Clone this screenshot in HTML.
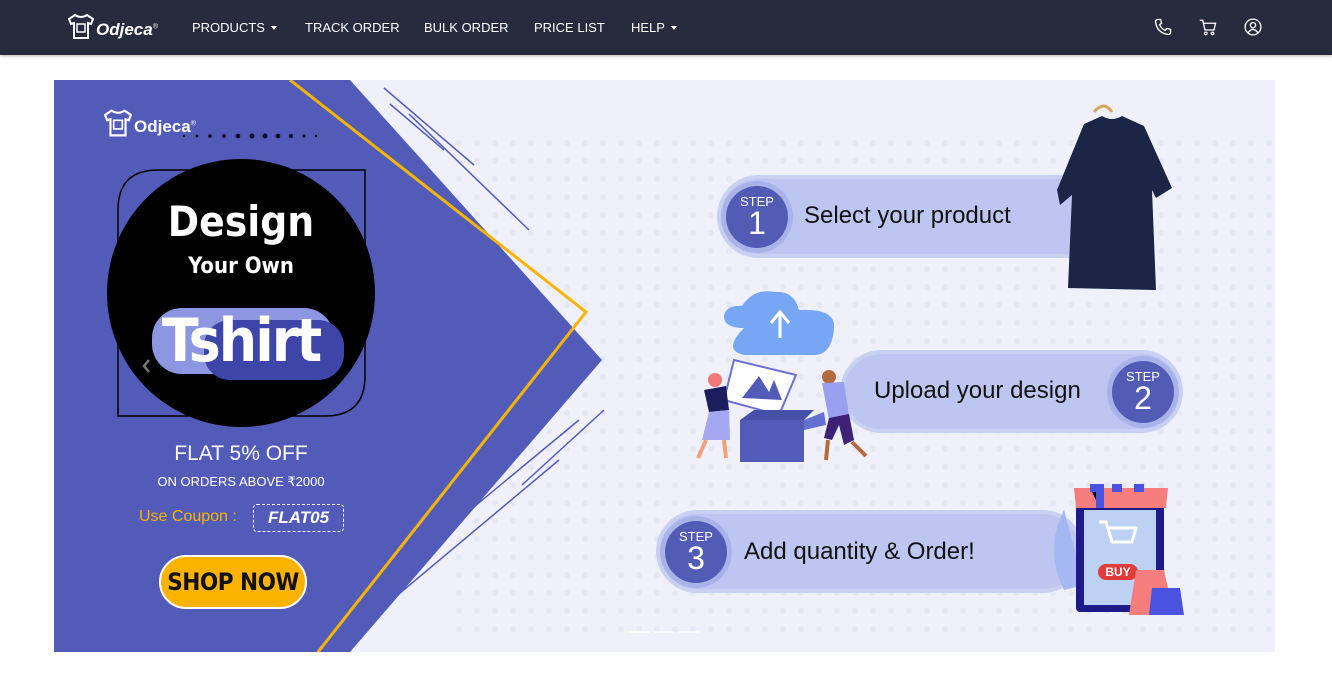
<!DOCTYPE html>
<html><head><meta charset="utf-8"><style>
*{margin:0;padding:0;box-sizing:border-box}
body{width:1332px;height:676px;background:#fff;font-family:"Liberation Sans",sans-serif;position:relative;overflow:hidden}
.nav{position:absolute;left:0;top:0;width:1332px;height:55px;background:#272b3e;box-shadow:0 1px 3px rgba(0,0,0,.3)}
.nav a{position:absolute;top:20px;color:#fff;font-size:13px;text-decoration:none;letter-spacing:0}
.caret{display:inline-block;margin-left:6px;border-left:3.5px solid transparent;border-right:3.5px solid transparent;border-top:4px solid #fff;vertical-align:2px}
.abs{position:absolute}
.pill{position:absolute;background:#bcc6f0;border-radius:40px;box-shadow:0 0 0 4px #c9d1f3}
.circ{position:absolute;width:62px;height:62px;border-radius:50%;background:#525cb5;box-shadow:0 0 0 5px #a9b3ea;color:#fff;text-align:center}
.circ .s{font-size:13px;margin-top:9px;line-height:13px}
.circ .n{font-size:32px;line-height:30px}
.st{position:absolute;font-size:24px;color:#111}
</style></head><body>
<div class="nav">
 <svg class="abs" style="left:68px;top:13px" width="26" height="27" viewBox="0 0 26 27"><path d="M7 2 L1 6 L3 11 L6 10 L6 25 L20 25 L20 10 L23 11 L25 6 L19 2 Q13 6 7 2Z" fill="none" stroke="#fff" stroke-width="2"/><rect x="9" y="11" width="8" height="8" fill="none" stroke="#fff" stroke-width="1.5"/></svg>
 <div class="abs" style="left:96px;top:20px;color:#fff;font-weight:bold;font-style:italic;font-size:17px">Odjeca<sup style="font-size:7px;font-weight:normal">®</sup></div>
 <a style="left:192px">PRODUCTS<span class="caret"></span></a>
 <a style="left:305px">TRACK ORDER</a>
 <a style="left:424px">BULK ORDER</a>
 <a style="left:534px">PRICE LIST</a>
 <a style="left:631px">HELP<span class="caret"></span></a>
 <svg class="abs" style="left:1154px;top:18px" width="18" height="18" viewBox="0 0 24 24"><path d="M5 2 L9 2 L10 7 L7.5 9 Q10 14.5 15 16.5 L17 14 L22 15 L22 19 Q22 22 19 22 Q4 20 2 5 Q2 2 5 2Z" fill="none" stroke="#fff" stroke-width="1.8"/></svg>
 <svg class="abs" style="left:1199px;top:18px" width="18" height="18" viewBox="0 0 24 24"><path d="M1 3 L5 3 L8 16 L20 16 L22 7 L6 7" fill="none" stroke="#fff" stroke-width="1.8"/><circle cx="9" cy="20.5" r="1.8" fill="none" stroke="#fff" stroke-width="1.5"/><circle cx="18" cy="20.5" r="1.8" fill="none" stroke="#fff" stroke-width="1.5"/></svg>
 <svg class="abs" style="left:1244px;top:18px" width="18" height="18" viewBox="0 0 24 24"><circle cx="12" cy="12" r="10.5" fill="none" stroke="#fff" stroke-width="1.8"/><circle cx="12" cy="9.5" r="3.5" fill="none" stroke="#fff" stroke-width="1.8"/><path d="M5.5 19.5 Q12 11 18.5 19.5" fill="none" stroke="#fff" stroke-width="1.8"/></svg>
</div>

<div class="abs" style="left:54px;top:80px;width:1221px;height:572px;background:#eff0f9;overflow:hidden">
 <svg class="abs" style="left:0;top:0" width="1221" height="572">
  <defs><pattern id="d" width="18" height="18" patternUnits="userSpaceOnUse"><circle cx="9" cy="9" r="3" fill="#dde1f1"/></pattern></defs>
  <rect x="400" y="60" width="820" height="500" fill="url(#d)" opacity=".5"/>
  <polygon points="0,0 296,0 548,280 296,572 0,572" fill="#525cb8"/>
  <polyline points="236,0 532,232 264,572" fill="none" stroke="#f9b400" stroke-width="3"/>
  <line x1="330" y1="8" x2="420" y2="85" stroke="#525cb8" stroke-width="1.5"/>
  <line x1="336" y1="24" x2="390" y2="70" stroke="#525cb8" stroke-width="1.5"/>
  <line x1="355" y1="34" x2="475" y2="150" stroke="#525cb8" stroke-width="1.5"/>
  <line x1="550" y1="330" x2="468" y2="405" stroke="#525cb8" stroke-width="1.5"/>
  <line x1="525" y1="340" x2="380" y2="460" stroke="#525cb8" stroke-width="1.5"/>
  <line x1="505" y1="380" x2="290" y2="560" stroke="#525cb8" stroke-width="1.5"/>
  <path d="M64 336 L64 130 Q64 90 104 90 L311 90 L311 296 Q311 336 271 336 Z" fill="#525cb8" stroke="#000" stroke-width="1.5"/>
  <circle cx="187" cy="213" r="134" fill="#000"/>
  <g fill="#0a0a20"><circle cx="130" cy="56" r="1.2"/><circle cx="143" cy="56" r="1.5"/><circle cx="156" cy="56" r="1.8"/><circle cx="170" cy="56" r="2"/><circle cx="184" cy="56" r="2.3"/><circle cx="198" cy="56" r="2.5"/><circle cx="211" cy="56" r="2.5"/><circle cx="224" cy="56" r="2.3"/><circle cx="237" cy="56" r="2"/><circle cx="250" cy="56" r="1.6"/><circle cx="262" cy="56" r="1.2"/></g>
  <path d="M95 280 L90 286 L95 292" fill="none" stroke="#777" stroke-width="2.5"/>
  <rect x="98" y="228" width="182" height="66" rx="30" fill="#8d96e0"/>
  <rect x="150" y="240" width="140" height="60" rx="26" fill="#3d45a8"/>
 </svg>
 <svg class="abs" style="left:50px;top:28px" width="28" height="30" viewBox="0 0 26 27"><path d="M7 2 L1 6 L3 11 L6 10 L6 25 L20 25 L20 10 L23 11 L25 6 L19 2 Q13 6 7 2Z" fill="none" stroke="#fff" stroke-width="2"/><rect x="9" y="11" width="8" height="8" fill="none" stroke="#fff" stroke-width="1.5"/></svg>
 <div class="abs" style="left:80px;top:37px;color:#fff;font-weight:bold;font-size:17px">Odjeca<sup style="font-size:7px;font-weight:normal">®</sup></div>
 <div class="abs" style="left:53px;top:118px;width:268px;text-align:center;color:#fff;font-weight:bold;font-size:42px;line-height:48px;font-family:'DejaVu Sans Condensed','DejaVu Sans',sans-serif">Design</div>
 <div class="abs" style="left:53px;top:174px;width:268px;text-align:center;color:#fff;font-weight:bold;font-size:22px;font-family:'DejaVu Sans Condensed','DejaVu Sans',sans-serif">Your Own</div>
 <div class="abs" style="left:53px;top:226px;width:268px;text-align:center;color:#fff;font-weight:bold;font-size:60px;line-height:70px;font-family:'DejaVu Sans Condensed','DejaVu Sans',sans-serif;letter-spacing:-2px">Tshirt</div>
 <div class="abs" style="left:53px;top:362px;width:268px;text-align:center;color:#fff;font-size:21px">FLAT 5% OFF</div>
 <div class="abs" style="left:53px;top:394px;width:268px;text-align:center;color:#fff;font-size:13px">ON ORDERS ABOVE ₹2000</div>
 <div class="abs" style="left:85px;top:428px;color:#f9b400;font-size:16px">Use Coupon :</div>
 <div class="abs" style="left:199px;top:424px;width:91px;height:28px;border:1.5px dashed #fff;border-radius:4px;color:#fff;font-style:italic;font-weight:bold;font-size:17px;text-align:center;line-height:25px">FLAT05</div>
 <div class="abs" style="left:105px;top:475px;width:148px;height:54px;border-radius:27px;background:#fbb300;border:2px solid #fff;text-align:center;line-height:50px;font-weight:bold;font-size:24px;color:#111;font-family:'DejaVu Sans Condensed',sans-serif;letter-spacing:-.5px">SHOP NOW</div>

 <div class="pill" style="left:667px;top:99px;width:420px;height:75px"></div>
 <div class="circ" style="left:672px;top:106px"><div class="s">STEP</div><div class="n">1</div></div>
 <div class="st" style="left:750px;top:122px">Select your product</div>
 <div class="pill" style="left:790px;top:274px;width:335px;height:75px"></div>
 <div class="circ" style="left:1058px;top:281px"><div class="s">STEP</div><div class="n">2</div></div>
 <div class="st" style="left:820px;top:297px">Upload your design</div>
 <div class="pill" style="left:606px;top:434px;width:420px;height:75px"></div>
 <div class="circ" style="left:611px;top:441px"><div class="s">STEP</div><div class="n">3</div></div>
 <div class="st" style="left:690px;top:458px">Add quantity &amp; Order!</div>

 <svg class="abs" style="left:0;top:0" width="1221" height="572">
  <path d="M1040 32 Q1050 20 1058 32" fill="none" stroke="#d9a55a" stroke-width="3"/>
  <path d="M1030 44 L1048 36 Q1058 42 1068 36 L1090 46 L1118 108 L1102 118 L1098 110 L1102 210 L1014 208 L1018 115 L1006 125 L1003 110 Z" fill="#1b2647"/>
  <path d="M690 248 Q670 248 670 236 Q672 225 688 226 Q700 208 720 212 Q740 210 745 230 Q782 228 780 248 Q778 275 760 275 L690 275 Q668 270 690 248Z" fill="#77a6f5"/>
  <path d="M726 258 L726 234 M717 243 L726 232 L735 243" stroke="#fff" stroke-width="3" fill="none"/>
  <path d="M680 280 L742 295 L725 335 L670 320Z" fill="#fff" stroke="#6972d0" stroke-width="2"/>
  <path d="M688 318 L705 296 L715 312 L720 300 L728 320Z" fill="#525cb8"/>
  <rect x="686" y="340" width="64" height="42" fill="#525cb8"/>
  <path d="M686 340 L700 330 L760 330 L750 340Z" fill="#4750a8"/>
  <path d="M750 340 L770 332 L772 345 L750 350Z" fill="#6470d0"/>
  <circle cx="661" cy="300" r="7" fill="#f27878"/>
  <path d="M650 310 L672 306 L675 330 L655 332Z" fill="#1c1d5c"/>
  <path d="M655 332 L675 330 L676 360 L648 360Z" fill="#a4a8f0"/>
  <path d="M652 360 L644 378 M670 360 L672 378" stroke="#f2a07a" stroke-width="4"/>
  <circle cx="775" cy="297" r="7" fill="#b36b3f"/>
  <path d="M768 303 L790 302 L795 335 L775 340Z" fill="#9b9ff0"/>
  <path d="M775 338 L795 334 L800 360 L790 365 L785 345 L778 360 L770 358Z" fill="#3d2175"/>
  <path d="M774 360 L772 380 M798 362 L812 376" stroke="#b36b3f" stroke-width="4"/>
  <path d="M1010 430 Q990 470 1010 510 L1030 505Z" fill="#a5b8f3"/>
  <rect x="1022" y="420" width="88" height="112" rx="4" fill="#1f1a8a"/>
  <rect x="1030" y="430" width="72" height="95" fill="#bcd1f3"/>
  <path d="M1020 408 L1114 408 L1112 428 L1022 428Z" fill="#f67d7d"/>
  <path d="M1036 408 L1046 408 L1046 428 M1058 408 L1068 408 M1080 408 L1090 408" stroke="#4a52e0" stroke-width="8"/>
  <path d="M1045 442 L1052 442 L1058 462 L1078 462 L1082 448 L1054 448" fill="none" stroke="#fff" stroke-width="3"/>
  <rect x="1044" y="484" width="40" height="16" rx="8" fill="#e23b3b"/>
  <text x="1064" y="496" fill="#fff" font-size="12" font-weight="bold" text-anchor="middle" font-family="Liberation Sans">BUY</text>
  <path d="M1082 490 L1110 490 L1120 535 L1075 535Z" fill="#f67d7d"/>
  <path d="M1098 508 L1126 508 L1130 535 L1095 535Z" fill="#4a52e0"/>
  <rect x="575" y="551" width="20" height="2" fill="#fff"/><rect x="600" y="551" width="20" height="2" fill="#fff" opacity=".6"/><rect x="625" y="551" width="20" height="2" fill="#fff" opacity=".6"/>
 </svg>
</div>
</body></html>
